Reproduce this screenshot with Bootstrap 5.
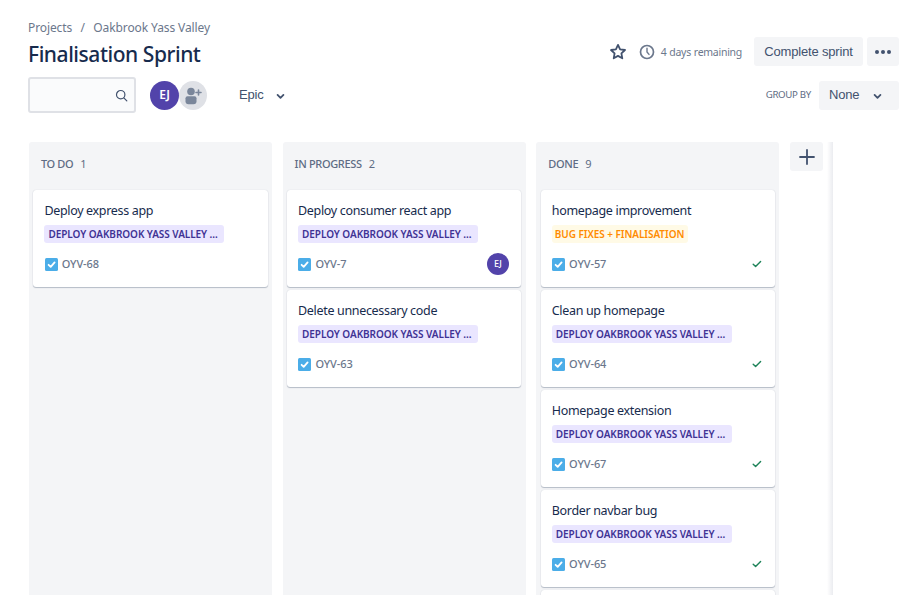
<!DOCTYPE html>
<html lang="en">
<head>
<meta charset="utf-8">
<meta name="viewport" content="width=device-width, initial-scale=1">
<title>Finalisation Sprint</title>
<link href="https://cdn.jsdelivr.net/npm/bootstrap@5.3.0/dist/css/bootstrap.min.css" rel="stylesheet">
<style>
  body { font-family: "Noto Sans", "Open Sans", sans-serif; color: #172b4d; height: 595px; }
  svg { display: block; flex: none; }
  .page { height: 595px; padding: 20px 14px 0 28px; }
  .crumbs { font-size: 12px; line-height: 16px; letter-spacing: -.1px; color: #6b778c; --bs-breadcrumb-item-padding-x: 8.4px; --bs-breadcrumb-divider-color: #6b778c; }
  .title-row { height: 31px; }
  .title-row h1 { font-size: 21px; line-height: 28px; font-weight: 500; letter-spacing: -.45px; padding-top: 4px; }
  .clock { margin: 0 6px 0 12px; }
  .remaining { font-size: 10.5px; letter-spacing: -.27px; word-spacing: .4px; color: #6b778c; margin-right: 12px; padding-top: 2px; }
  .tool { background: #f4f5f7; color: #42526e; font: 13px/18px "Liberation Sans", Arial, sans-serif; letter-spacing: -.18px; height: 29px; border: 0; border-radius: 3px; padding: 0 11px; }
  .tool:hover { background: #ebecf0; }
  .tool-sprint { width: 109px; padding: 0; }
  .tool-more { width: 32px; padding: 0; }
  .tool-group { width: 80px; padding: 0 17px 0 10px; }
  .tool-epic { background: none; padding: 0; gap: 12px; margin-left: 32px; }
  .tool-epic svg, .tool-group svg { margin-top: 3px; }
  .filters { height: 36px; margin-top: 10px; }
  .search { width: 108px; height: 36px; border: 2px solid #dfe1e6; border-radius: 3px; background: #fafbfc; padding-right: 6px; margin-right: 14px; }
  .search input { min-width: 0; outline: 0; }
  .avatar { width: 29px; height: 29px; background: #5243aa; color: #fff; font-size: 12px; font-weight: 600; letter-spacing: -.4px; }
  .avatar-sm { width: 22px; height: 22px; font-size: 9px; font-weight: 500; margin-right: 1px; }
  .avatar-add { background: #dfe1e6; width: 28px; }
  .avatar-add svg { margin-left: -2px; }
  .group-label { font-size: 9.7px; letter-spacing: -.32px; color: #5e6c84; padding-top: 1px; }
  .board { height: 453px; margin-top: 29px; gap: 10.7px; width: 805px; background: linear-gradient(to left, #ebecf0, #fff 6px); padding-left: 1px; }
  .lane { width: 243px; background: #f4f5f7; border-radius: 3px 3px 0 0; padding: 0 4.4px; }
  .lane-head { height: 48px; padding: 0 7.5px 4px; font-size: 11px; font-weight: 500; letter-spacing: -.33px; color: #5e6c84; gap: 7px; }
  .lane-head span + span { font-weight: 400; }
  .issue { height: 97px; margin-bottom: 3px; background: #fff; border-radius: 3px; box-shadow: 0 1px 1px rgba(9,30,66,.25), 0 0 1px rgba(9,30,66,.2); padding: 12px 11.5px 0 11px; }
  .issue-title { font-size: 12.5px; line-height: 18px; letter-spacing: -.33px; }
  .epic { align-self: start; width: 180px; height: 18px; margin-top: 5px; padding: 0 0 0 4px; border-radius: 3px; background: #eae6ff; color: #403294; font-size: 10px; line-height: 18px; font-weight: 600; letter-spacing: -.06px; }
  .epic-warm { background: #fffae6; color: #ff8b00; width: 136px; padding: 0 0 0 3px; }
  .issue-foot { height: 22px; margin-top: 10px; padding-left: .3px; color: #6b778c; font-size: 11px; font-weight: 500; letter-spacing: -.1px; }
  .check { margin: 0 1.5px 0 auto; }
  .add-lane { width: 33px; height: 29px; background: #f4f5f7; border-radius: 3px; }
</style>
</head>
<body class="bg-white overflow-hidden">
<svg class="d-none" aria-hidden="true">
  <symbol id="task" viewBox="0 0 13 13"><rect width="13" height="13" rx="1.5" fill="#4bade8"/><path d="M3.6 6.8l2.1 2.1 3.9-4.5" fill="none" stroke="#fff" stroke-width="1.8" stroke-linecap="round" stroke-linejoin="round"/></symbol>
  <symbol id="done" viewBox="0 0 10 8"><path d="M1.2 4.2l2.4 2.4 5-5.2" fill="none" stroke="#1f845a" stroke-width="1.4" stroke-linecap="round" stroke-linejoin="round"/></symbol>
  <symbol id="chev" viewBox="0 0 8 6"><path d="M1.4 1.6L4 4.2l2.6-2.6" fill="none" stroke="#42526e" stroke-width="1.6" stroke-linecap="round" stroke-linejoin="round"/></symbol>
</svg>
<div class="page d-flex flex-column overflow-hidden">
  <nav aria-label="breadcrumb">
    <ol class="breadcrumb crumbs mb-0">
      <li class="breadcrumb-item">Projects</li>
      <li class="breadcrumb-item">Oakbrook Yass Valley</li>
    </ol>
  </nav>
  <header class="title-row d-flex align-items-center">
    <h1 class="mb-0 me-auto">Finalisation Sprint</h1>
    <svg width="18" height="18" viewBox="0 0 18 18"><path d="M9 1.9l2.1 4.5 4.9.6-3.6 3.4.9 4.9L9 12.9l-4.3 2.4.9-4.9L2 7l4.9-.6z" fill="none" stroke="#42526e" stroke-width="1.8" stroke-linejoin="round"/></svg>
    <svg class="clock" width="16" height="16" viewBox="0 0 16 16"><circle cx="8" cy="8" r="6.5" fill="none" stroke="#6b778c" stroke-width="1.7"/><path d="M8 4.3V8l2 2.4" fill="none" stroke="#6b778c" stroke-width="1.4" stroke-linecap="round"/></svg>
    <span class="remaining">4 days remaining</span>
    <button class="tool tool-sprint me-1 text-nowrap">Complete sprint</button>
    <button class="tool tool-more d-flex align-items-center justify-content-center" aria-label="More"><svg width="18" height="6" viewBox="0 0 18 6" fill="#42526e"><circle cx="3" cy="3" r="2"/><circle cx="9" cy="3" r="2"/><circle cx="15" cy="3" r="2"/></svg></button>
  </header>
  <div class="filters d-flex align-items-center">
    <label class="search d-flex align-items-center">
      <input class="border-0 bg-transparent flex-grow-1" type="text" aria-label="Search">
      <svg width="13" height="13" viewBox="0 0 13 13" fill="none" stroke="#42526e" stroke-width="1.2" stroke-linecap="round"><circle cx="5.7" cy="5.7" r="4.2"/><path d="M8.8 8.8l3 3"/></svg>
    </label>
    <span class="avatar rounded-circle d-flex align-items-center justify-content-center">EJ</span>
    <span class="avatar avatar-add rounded-circle d-flex align-items-center justify-content-center"><svg width="29" height="29" viewBox="0 0 29 29" fill="#7a869a"><circle cx="13" cy="10.5" r="3.8"/><path d="M7.5 17.3q0-2 2-2h7q2 0 2 2v3q0 3-3 3h-5q-3 0-3-3z"/><path d="M20.5 9v5M18 11.5h5" stroke="#7a869a" stroke-width="1.6" stroke-linecap="round"/></svg></span>
    <button class="tool tool-epic d-flex align-items-center me-auto">Epic<svg width="9" height="7"><use href="#chev"/></svg></button>
    <span class="group-label me-2">GROUP BY</span>
    <button class="tool tool-group d-flex align-items-center justify-content-between">None<svg width="9" height="7"><use href="#chev"/></svg></button>
  </div>
  <main class="board d-flex flex-shrink-0">
    <section class="lane flex-shrink-0">
      <div class="lane-head d-flex align-items-center"><span>TO DO</span><span>1</span></div>
      <article class="issue d-flex flex-column"><div class="issue-title">Deploy express app</div><span class="epic text-nowrap">DEPLOY OAKBROOK YASS VALLEY ...</span>
        <div class="issue-foot d-flex align-items-center gap-1"><svg width="13" height="13"><use href="#task"/></svg>OYV-68</div></article>
    </section>
    <section class="lane flex-shrink-0">
      <div class="lane-head d-flex align-items-center"><span>IN PROGRESS</span><span>2</span></div>
      <article class="issue d-flex flex-column"><div class="issue-title">Deploy consumer react app</div><span class="epic text-nowrap">DEPLOY OAKBROOK YASS VALLEY ...</span>
        <div class="issue-foot d-flex align-items-center gap-1"><svg width="13" height="13"><use href="#task"/></svg>OYV-7<span class="avatar avatar-sm rounded-circle d-flex align-items-center justify-content-center ms-auto">EJ</span></div></article>
      <article class="issue d-flex flex-column"><div class="issue-title">Delete unnecessary code</div><span class="epic text-nowrap">DEPLOY OAKBROOK YASS VALLEY ...</span>
        <div class="issue-foot d-flex align-items-center gap-1"><svg width="13" height="13"><use href="#task"/></svg>OYV-63</div></article>
    </section>
    <section class="lane flex-shrink-0 overflow-hidden">
      <div class="lane-head d-flex align-items-center"><span>DONE</span><span>9</span></div>
      <article class="issue d-flex flex-column"><div class="issue-title">homepage improvement</div><span class="epic epic-warm text-nowrap">BUG FIXES + FINALISATION</span>
        <div class="issue-foot d-flex align-items-center gap-1"><svg width="13" height="13"><use href="#task"/></svg>OYV-57<svg class="check" width="10" height="8"><use href="#done"/></svg></div></article>
      <article class="issue d-flex flex-column"><div class="issue-title">Clean up homepage</div><span class="epic text-nowrap">DEPLOY OAKBROOK YASS VALLEY ...</span>
        <div class="issue-foot d-flex align-items-center gap-1"><svg width="13" height="13"><use href="#task"/></svg>OYV-64<svg class="check" width="10" height="8"><use href="#done"/></svg></div></article>
      <article class="issue d-flex flex-column"><div class="issue-title">Homepage extension</div><span class="epic text-nowrap">DEPLOY OAKBROOK YASS VALLEY ...</span>
        <div class="issue-foot d-flex align-items-center gap-1"><svg width="13" height="13"><use href="#task"/></svg>OYV-67<svg class="check" width="10" height="8"><use href="#done"/></svg></div></article>
      <article class="issue d-flex flex-column"><div class="issue-title">Border navbar bug</div><span class="epic text-nowrap">DEPLOY OAKBROOK YASS VALLEY ...</span>
        <div class="issue-foot d-flex align-items-center gap-1"><svg width="13" height="13"><use href="#task"/></svg>OYV-65<svg class="check" width="10" height="8"><use href="#done"/></svg></div></article>
      <article class="issue"></article>
    </section>
    <button class="add-lane btn border-0 p-0 d-flex align-items-center justify-content-center" aria-label="Add column"><svg width="16" height="16" viewBox="0 0 16 16"><path d="M8 1v14M1 8h14" stroke="#42526e" stroke-width="1.8" stroke-linecap="round"/></svg></button>
  </main>
</div>
<script src="https://cdn.jsdelivr.net/npm/bootstrap@5.3.0/dist/js/bootstrap.bundle.min.js"></script>
</body>
</html>
